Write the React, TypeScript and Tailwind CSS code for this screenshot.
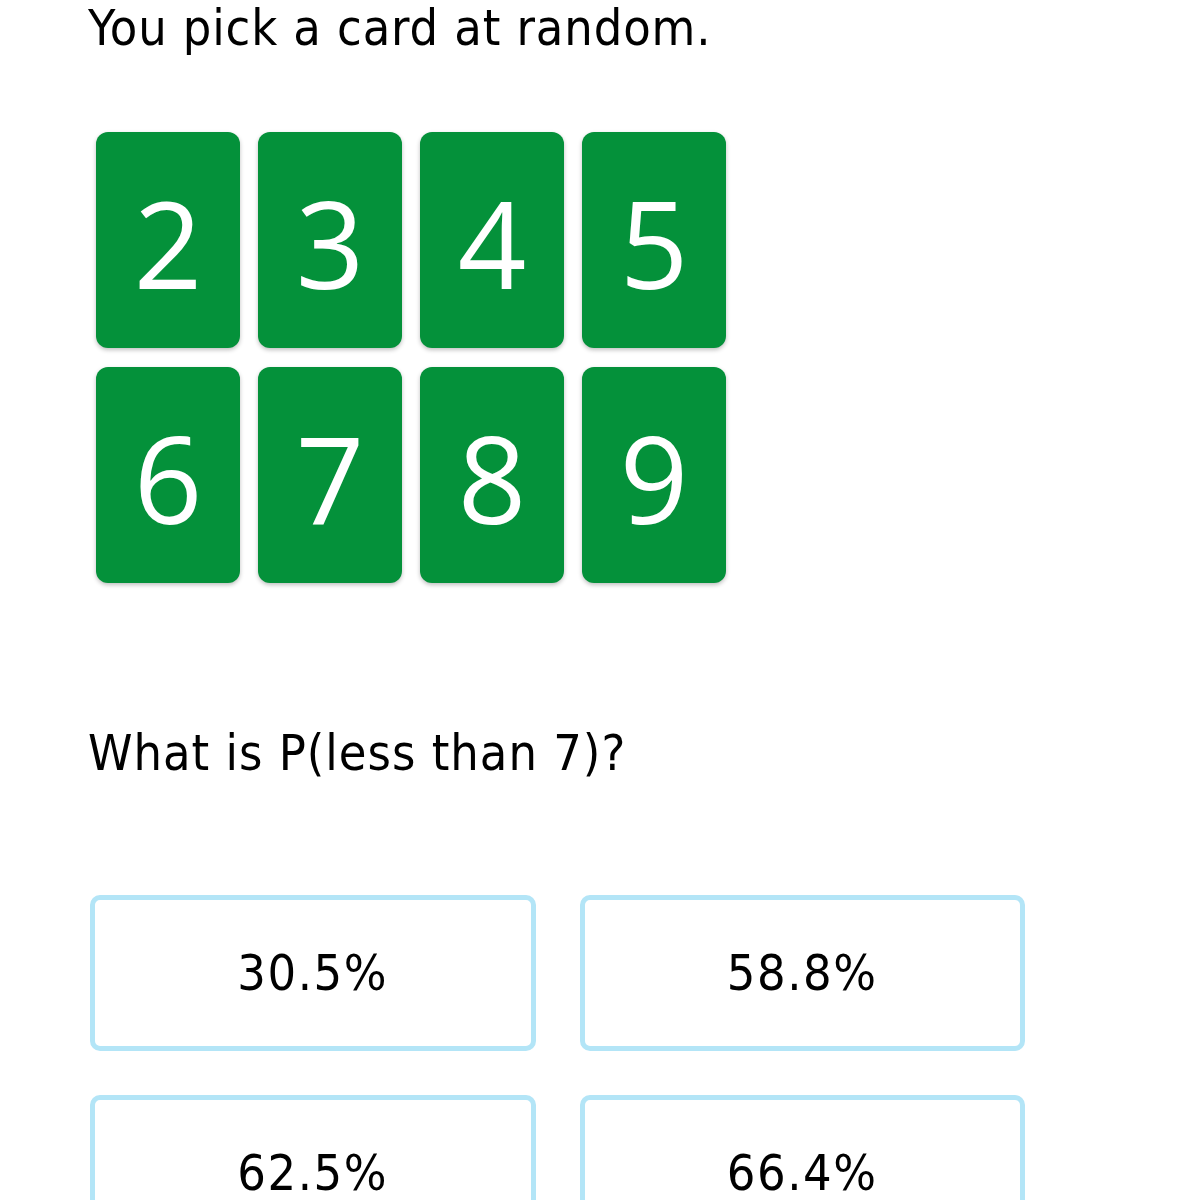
import React from "react";

const cards = [2, 3, 4, 5, 6, 7, 8, 9];
const answers = ["30.5%", "58.8%", "62.5%", "66.4%"];

export default function App() {
  return (
    <div
      className="min-h-[1200px] bg-white pl-[88px] text-black font-stretch-condensed"
      style={{ fontFamily: '"DejaVu Sans Condensed", "DejaVu Sans", Verdana, sans-serif' }}
    >
      <p className="text-[50px] leading-[56px] tracking-[0.9px]">You pick a card at random.</p>
      <div className="mt-[76px] ml-[8px] grid w-[630px] grid-cols-4 gap-x-[18px] gap-y-[19px]">
        {cards.map((c) => (
          <div
            key={c}
            className="flex h-[216px] w-[144px] items-center justify-center rounded-[12px] bg-[#04913a] text-white shadow-[0_2px_4px_rgba(0,0,0,0.25)] font-stretch-normal"
            style={{ fontFamily: '"Open Sans", "Noto Sans", sans-serif' }}
          >
            <span className="pt-[6px] text-[120px] leading-none">{c}</span>
          </div>
        ))}
      </div>
      <p className="mt-[142px] text-[50px] leading-[56px] tracking-[1px]">What is P(less than 7)?</p>
      <div className="mt-[114px] ml-[2px] grid w-[935px] grid-cols-2 gap-x-[44px] gap-y-[44px]">
        {answers.map((a) => (
          <div
            key={a}
            className="flex h-[156px] items-center justify-center rounded-[10px] border-[5px] border-[#b3e5f7] bg-white text-[50px] tracking-[1.6px]"
          >
            {a}
          </div>
        ))}
      </div>
    </div>
  );
}
